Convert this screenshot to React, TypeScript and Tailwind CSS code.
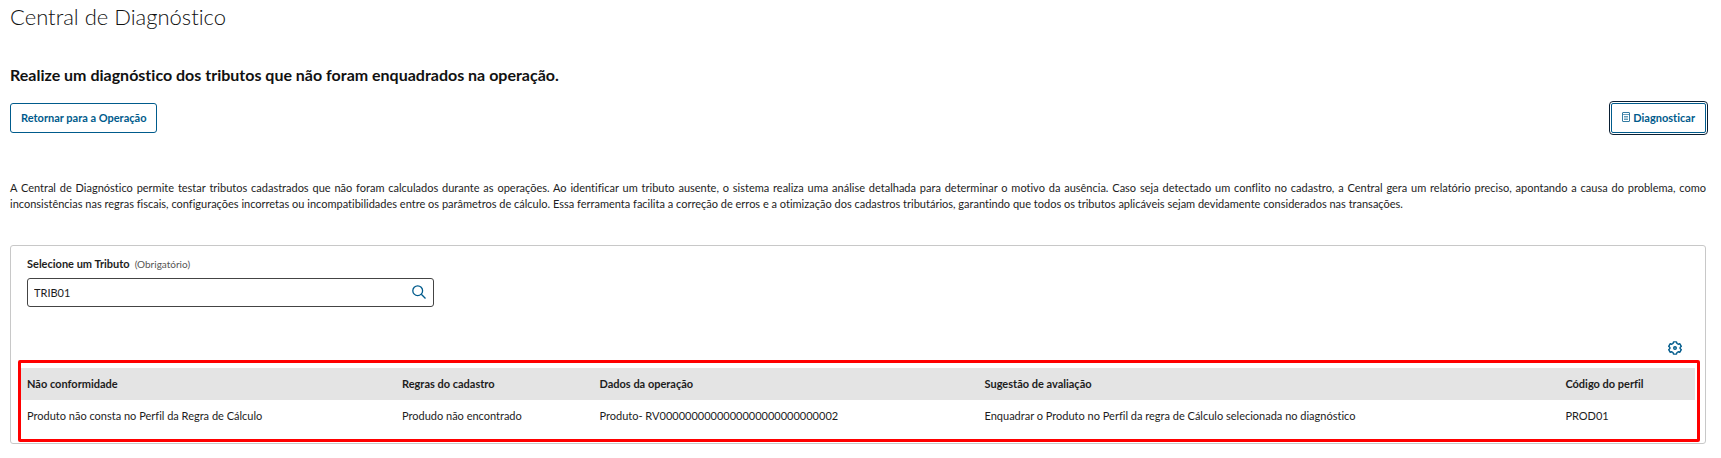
import { useState } from "react";

const rows = [
  {
    issue: "Produto não consta no Perfil da Regra de Cálculo",
    rule: "Produdo não encontrado",
    data: "Produto- RV0000000000000000000000000002",
    suggestion: "Enquadrar o Produto no Perfil da regra de Cálculo selecionada no diagnóstico",
    profile: "PROD01",
  },
];

function CalculatorIcon() {
  return (
    <svg className="mb-[2px] h-[10px] w-2" viewBox="0 0 8 10" fill="none" stroke="currentColor" aria-hidden="true">
      <rect x="0.5" y="0.5" width="7" height="9" rx="0.5" strokeWidth="0.8" />
      <path d="M1 2.5h6M2 4.5h4M2 6h4M2 7.5h4" strokeWidth="0.6" />
    </svg>
  );
}

function SearchIcon() {
  return (
    <svg className="size-[14px]" viewBox="0 0 14 14" fill="none" stroke="currentColor" strokeWidth="1.3" aria-hidden="true">
      <circle cx="5.7" cy="5.7" r="4.9" />
      <path d="M9.3 9.3l4.2 4.2" />
    </svg>
  );
}

function GearIcon() {
  return (
    <svg className="size-[14px]" viewBox="0 0 14 14" fill="none" stroke="currentColor" strokeWidth="1.4" strokeLinejoin="round" aria-hidden="true">
      <path d="M5.5 0.9h3l.5 1.6 1.2.7 1.7-.4 1.4 2.5-1.2 1.2v1l1.2 1.2-1.4 2.5-1.7-.4-1.2.7-.5 1.6h-3L5 11.500l-1.200-.700-1.700.400L.7 8.700l1.200-1.200v-1L.7 5.300l1.400-2.500 1.700.4L5 2.500z" />
      <circle cx="7" cy="7" r="1.3" />
    </svg>
  );
}

export default function App() {
  const [tax, setTax] = useState("TRIB01");

  return (
    <main className="pt-1 pr-[15px] pl-[10px] font-[Lato,sans-serif] text-[11px] leading-4 text-[#1d1d1d] [font-variant-ligatures:none]">
      <h1 className="text-[22px] leading-[26px] font-light text-[#111]">Central de Diagnóstico</h1>
      <h2 className="mt-[35px] text-base leading-5 font-bold text-[#111]">
        Realize um diagnóstico dos tributos que não foram enquadrados na operação.
      </h2>

      <div className="mt-[18px] flex items-center justify-between font-bold text-[#005b8c]">
        <button type="button" className="h-[30px] rounded-[3px] border border-[#005b8c] px-[10px]">
          Retornar para a Operação
        </button>
        <button
          type="button"
          className="flex h-[30px] items-center gap-[3px] rounded-[2px] border border-[#005b8c] px-[10px] outline-1 outline-offset-1 outline-[#0a1f33]"
        >
          <CalculatorIcon />
          Diagnosticar
        </button>
      </div>

      <p className="mt-[47px] text-justify">
        A Central de Diagnóstico permite testar tributos cadastrados que não foram calculados durante as operações. Ao
        identificar um tributo ausente, o sistema realiza uma análise detalhada para determinar o motivo da ausência.
        Caso seja detectado um conflito no cadastro, a Central gera um relatório preciso, apontando a causa do problema,
        como inconsistências nas regras fiscais, configurações incorretas ou incompatibilidades entre os parâmetros de
        cálculo. Essa ferramenta facilita a correção de erros e a otimização dos cadastros tributários, garantindo que
        todos os tributos aplicáveis sejam devidamente considerados nas transações.
      </p>

      <section className="mt-[33px] rounded-[3px] border border-[#c8c8c8] pt-[10px] pb-px">
        <div className="px-4">
          <label htmlFor="tax" className="flex items-center gap-[5px] font-bold">
            Selecione um Tributo
            <span className="text-[10px] font-normal text-[#555]">(Obrigatório)</span>
          </label>
          <div className="mt-[6px] flex h-[29px] w-[24.5%] items-center rounded-[3px] border border-[#444] pr-[7px] pl-[6px]">
            <input
              id="tax"
              value={tax}
              onChange={(e) => setTax(e.target.value)}
              className="min-w-0 flex-1 outline-none"
            />
            <button type="button" aria-label="Pesquisar" className="pb-[2px] text-[#005b8c]">
              <SearchIcon />
            </button>
          </div>
        </div>

        <div className="mt-[34px] flex justify-end pr-[23px]">
          <button type="button" aria-label="Configurar colunas" className="text-[#005b8c]">
            <GearIcon />
          </button>
        </div>

        {/* Highlighted results */}
        <div className="mt-[5px] mr-[5px] ml-[7px] rounded-[2px] border-3 border-[#ff0000] pt-[5px] pr-[2px] pb-[7px]">
          <table className="w-full table-fixed text-left">
            <thead className="bg-[#e4e4e4]">
              <tr className="h-8">
                <th className="w-[22.4%] pl-[6px]">Não conformidade</th>
                <th className="w-[11.8%] pl-[6px]">Regras do cadastro</th>
                <th className="w-[23%] pl-[6px]">Dados da operação</th>
                <th className="w-[34.7%] pl-[6px]">Sugestão de avaliação</th>
                <th className="pl-[6px]">Código do perfil</th>
              </tr>
            </thead>
            <tbody>
              {rows.map((row) => (
                <tr key={row.data} className="h-8">
                  <td className="pl-[6px]">{row.issue}</td>
                  <td className="pl-[6px]">{row.rule}</td>
                  <td className="pl-[6px]">{row.data}</td>
                  <td className="pl-[6px]">{row.suggestion}</td>
                  <td className="pl-[6px]">{row.profile}</td>
                </tr>
              ))}
            </tbody>
          </table>
        </div>
      </section>
    </main>
  );
}
